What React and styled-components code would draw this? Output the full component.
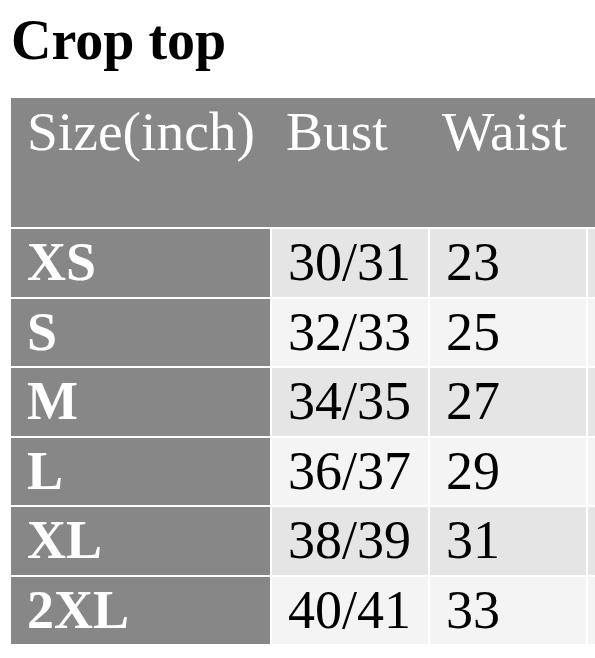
import React from "react";
import styled, { createGlobalStyle } from "styled-components";

const Global = createGlobalStyle`
  html, body { margin: 0; padding: 0; background: #ffffff; overflow: hidden; }
  body { font-family: "Liberation Serif", "Times New Roman", serif; }
`;

const Page = styled.div`
  padding: 12px 0 0 11px;
  width: 595px;
  height: 658px;
  box-sizing: border-box;
  overflow: hidden;
`;

const Title = styled.h1`
  margin: 0 0 30px 0;
  font-size: 56px;
  line-height: 1;
  font-weight: 700;
  color: #000;
`;

const Table = styled.div`
  display: flex;
  flex-direction: column;
  gap: 2px;
  width: 760px;
`;

const cols = "259px 156px 156px 183px";

const HeaderRow = styled.div`
  display: grid;
  grid-template-columns: ${cols};
  height: 129px;
  background: #878787;
`;

const HeadCell = styled.div`
  padding: 2px 0 0 16px;
  font-size: 55.5px;
  line-height: 1.15;
  color: #ffffff;
  white-space: nowrap;
`;

const Row = styled.div`
  display: grid;
  grid-template-columns: ${cols};
  column-gap: 2px;
  height: 67.5px;
`;

const SizeCell = styled.div`
  background: #878787;
  color: #ffffff;
  font-weight: 700;
  font-size: 54px;
  line-height: 1.15;
  padding: 2px 0 0 16px;
`;

const Cell = styled.div`
  background: ${(p) => (p.$alt ? "#f4f4f4" : "#e5e5e5")};
  color: #000;
  font-size: 54px;
  line-height: 1.15;
  padding: 2px 0 0 16px;
  white-space: nowrap;
`;

const rows = [
  ["XS", "30/31", "23"],
  ["S", "32/33", "25"],
  ["M", "34/35", "27"],
  ["L", "36/37", "29"],
  ["XL", "38/39", "31"],
  ["2XL", "40/41", "33"],
];

export default function App() {
  return (
    <Page>
      <Global />
      <Title>Crop top</Title>
      <Table>
        <HeaderRow>
          <HeadCell>Size(inch)</HeadCell>
          <HeadCell>Bust</HeadCell>
          <HeadCell>Waist</HeadCell>
          <HeadCell />
        </HeaderRow>
        {rows.map(([size, bust, waist], i) => (
          <Row key={size}>
            <SizeCell>{size}</SizeCell>
            <Cell $alt={i % 2 === 1}>{bust}</Cell>
            <Cell $alt={i % 2 === 1}>{waist}</Cell>
            <Cell $alt={i % 2 === 1} />
          </Row>
        ))}
      </Table>
    </Page>
  );
}
